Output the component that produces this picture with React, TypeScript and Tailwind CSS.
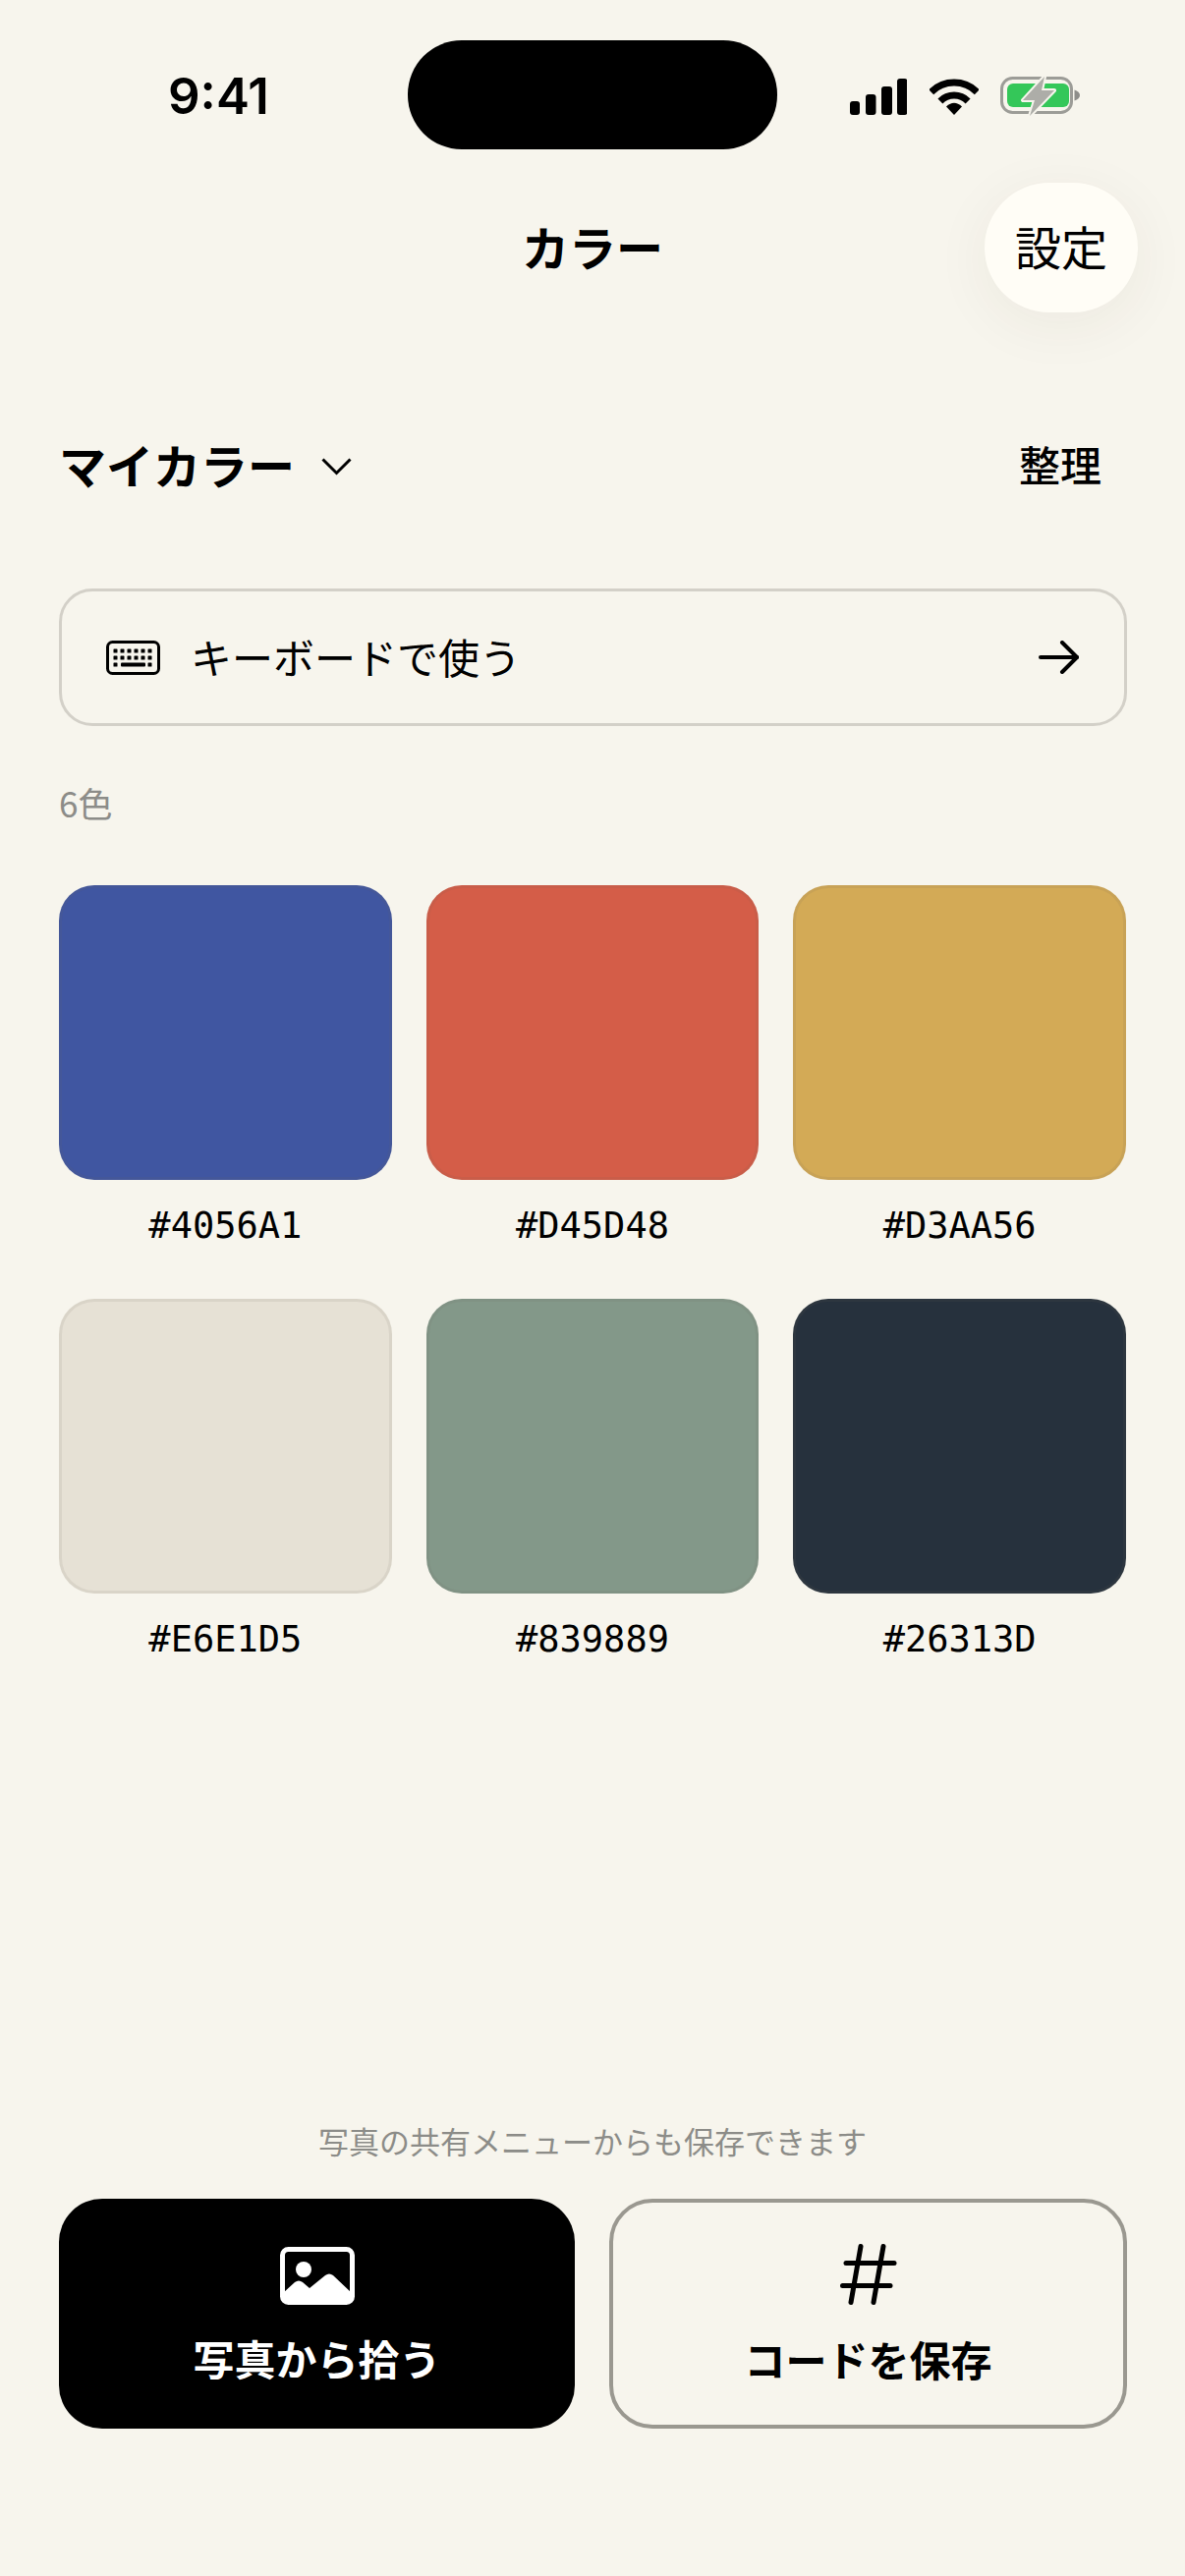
const SWATCHES = ["#4056A1", "#D45D48", "#D3AA56", "#E6E1D5", "#839889", "#26313D"];

function SignalIcon() {
  return (
    <svg width="58" height="37" viewBox="0 0 58 37" fill="#000">
      <rect x="0" y="23" width="10" height="14" rx="3" />
      <rect x="16" y="16" width="10.5" height="21" rx="3" />
      <rect x="32" y="8" width="11" height="29" rx="3" />
      <rect x="48" y="0" width="10.5" height="37" rx="3" />
    </svg>
  );
}

function WifiIcon() {
  return (
    <svg width="50" height="37" viewBox="0 0 50 37" fill="none" stroke="#000" strokeWidth="7">
      <path d="M1.7 13.7A33 33 0 0 1 48.3 13.7" />
      <path d="M10.9 22.9A20 20 0 0 1 39.1 22.9" />
      <path d="M25 37L17 28.5Q25 21 33 28.5Z" fill="#000" stroke="none" />
    </svg>
  );
}

function BatteryIcon() {
  return (
    <svg width="82" height="42" viewBox="0 0 82 42" fill="none">
      <rect x="1.5" y="2.5" width="71" height="35" rx="11" stroke="#9C9C97" strokeWidth="3" />
      <rect x="7" y="8" width="63" height="24" rx="6" fill="#34C759" />
      <path d="M75.5 14.5C79 15.5 81 17.5 81 20S79 24.5 75.5 25.5Z" fill="#8E8E8A" />
      <path d="M45 1L23 25H35L30 41L55 15H42Z" fill="#ADADA8" stroke="#F7F5ED" strokeWidth="4" strokeLinejoin="round" paintOrder="stroke" />
    </svg>
  );
}

function KeyboardIcon() {
  const xs = [9.5, 16.5, 23.5, 30.5, 37.5, 44.5];
  const ys = [10.5, 17.5];
  return (
    <svg width="55" height="35" viewBox="0 0 55 35" className="shrink-0">
      <rect x="1.5" y="1.5" width="52" height="32" rx="5" fill="none" stroke="#000" strokeWidth="3" />
      {ys.map((y) =>
        xs.map((x) => <rect key={`${x}-${y}`} x={x - 2} y={y - 2} width="4" height="4" rx="0.6" fill="#000" />),
      )}
      <rect x="7.5" y="22.5" width="4" height="4" rx="0.6" fill="#000" />
      <rect x="15" y="22.5" width="25" height="4" rx="1" fill="#000" />
      <rect x="42.5" y="22.5" width="4" height="4" rx="0.6" fill="#000" />
    </svg>
  );
}

function PhotoIcon() {
  return (
    <svg width="76" height="59" viewBox="0 0 76 59" fill="#fff">
      <rect x="2.5" y="2.5" width="71" height="54" rx="6" fill="none" stroke="#fff" strokeWidth="5" />
      <circle cx="24" cy="23" r="8" />
      <path d="M3 47L15 36Q19 33 23 36L30 42L46 29Q50 26 54 29L73 47V52Q73 57 68 57H8Q3 57 3 52Z" />
    </svg>
  );
}

function HashIcon() {
  return (
    <svg width="58" height="62" viewBox="0 0 58 62" fill="none" stroke="#000" strokeWidth="5" strokeLinecap="round">
      <path d="M21 2.5L11 59.5" />
      <path d="M44 2.5L34 59.5" />
      <path d="M6 19.5H55" />
      <path d="M2.5 42.5H51" />
    </svg>
  );
}

export default function App() {
  return (
    <div className="flex h-[2622px] w-[1206px] flex-col overflow-hidden bg-[#F7F5ED] font-['Noto_Sans_CJK_JP','Noto_Sans',sans-serif] text-black">
      <div className="mt-[41px] flex h-[111px] items-start">
        <div className="w-[415px] pl-[171px] pt-[25px] font-['Inter',sans-serif] text-[51px] leading-[64px] font-semibold">
          9:41
        </div>
        <div className="h-[111px] w-[376px] rounded-[55px] bg-black" />
        <div className="flex flex-1 items-center pl-[74px] pt-[36px]">
          <SignalIcon />
          <div className="ml-[23px]">
            <WifiIcon />
          </div>
          <div className="ml-[22px]">
            <BatteryIcon />
          </div>
        </div>
      </div>

      <div className="relative mt-[34px] flex h-[132px] items-center justify-center">
        <h1 className="-mt-[4px] text-[48px] leading-none font-bold">カラー</h1>
        <button
          type="button"
          className="absolute right-[48px] top-0 h-[132px] w-[156px] rounded-[66px] bg-[#FFFDF6] pb-[3px] text-[47px] shadow-[0_12px_60px_rgba(60,50,30,0.06)]"
        >
          設定
        </button>
      </div>

      <div className="mx-[60px] mt-[126px] flex h-[60px] items-center justify-between">
        <div className="flex items-center">
          <h2 className="-mt-[4px] text-[48px] leading-none font-bold">マイカラー</h2>
          <svg width="31" height="18" viewBox="0 0 31 18" fill="none" stroke="#000" strokeWidth="3" className="ml-[27px] mt-[1px]">
            <path d="M1.5 1.5L15.5 15.5L29.5 1.5" />
          </svg>
        </div>
        <span className="-mt-[4px] mr-[25px] text-[42px] leading-none font-medium">整理</span>
      </div>

      <button
        type="button"
        className="ml-[60px] mr-[59px] mt-[95px] flex h-[140px] items-center rounded-[34px] border-[3px] border-[#D3D0C8] pl-[45px] pr-[46px]"
      >
        <KeyboardIcon />
        <span className="-mt-[3px] ml-[31px] flex-1 text-left text-[42px] leading-none">キーボードで使う</span>
        <svg width="41" height="34" viewBox="0 0 41 34" fill="none" stroke="#000" strokeWidth="4" strokeLinecap="round" strokeLinejoin="round">
          <path d="M2 17H39" />
          <path d="M24 2L39 17L24 32" />
        </svg>
      </button>

      <p className="mx-[60px] mt-[58px] h-[42px] text-[35px] leading-[40px] text-[#8C8C88]">6色</p>

      <div className="mx-[60px] mt-[62px] grid grid-cols-3 gap-x-[35px] gap-y-[52px]">
        {SWATCHES.map((hex) => (
          <div key={hex}>
            <div
              className="h-[300px] rounded-[36px] border-[3px] border-[#6b6658]/10"
              style={{ backgroundColor: hex }}
            />
            <p className="mt-[25px] h-[44px] text-center font-['DejaVu_Sans_Mono',monospace] text-[37px] leading-[44px]">
              {hex}
            </p>
          </div>
        ))}
      </div>

      <div className="flex-1" />

      <p className="h-[44px] text-center text-[31px] leading-[40px] text-[#8C8C88]">
        写真の共有メニューからも保存できます
      </p>

      <div className="mx-[60px] mb-[150px] mt-[35px] flex justify-between">
        <button type="button" className="flex h-[234px] w-[525px] flex-col items-center rounded-[44px] bg-black pt-[49px] text-white">
          <PhotoIcon />
          <span className="mt-[24px] text-[42px] leading-[60px] font-semibold">写真から拾う</span>
        </button>
        <button type="button" className="-mr-[1px] flex h-[234px] w-[527px] flex-col items-center rounded-[44px] border-[4px] border-[#9A9890] pt-[42px]">
          <HashIcon />
          <span className="mt-[25px] text-[42px] leading-[60px] font-bold">コードを保存</span>
        </button>
      </div>
    </div>
  );
}
